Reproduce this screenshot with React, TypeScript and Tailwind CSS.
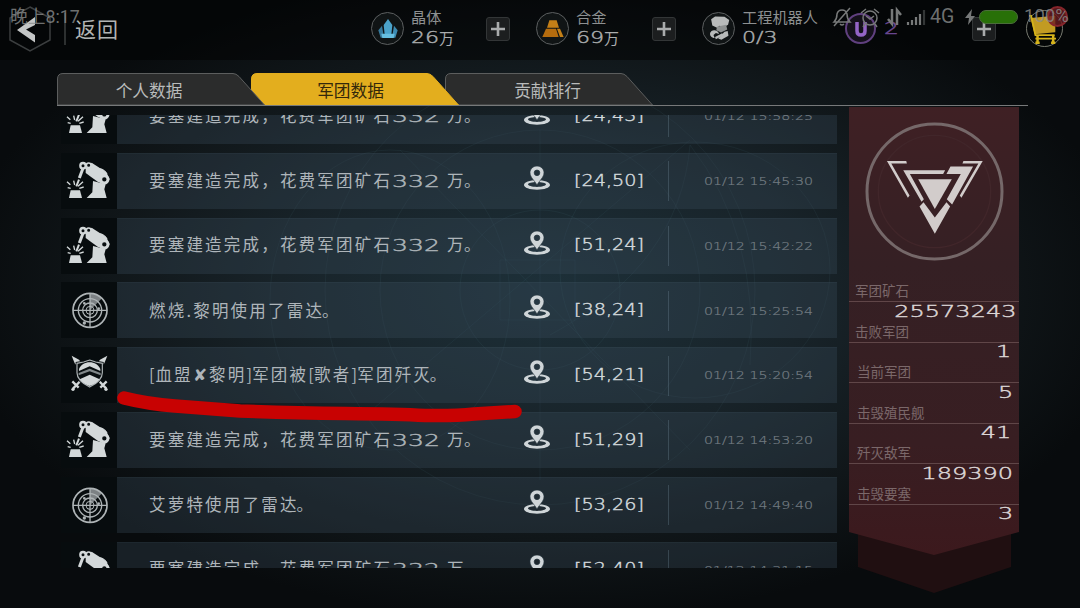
import type { ReactNode } from "react";
import clsx from "clsx";

type EventKind = "build" | "radar" | "battle";

type LogEntry = {
  kind: EventKind;
  text: ReactNode;
  coords: string;
  time: string;
};

function BuildText() {
  return (
    <>
      要塞建造完成，花费军团矿石
      <span className="inline-block w-[48px] font-['DejaVu_Sans'] text-[15px] tracking-normal">
        <span className="inline-block origin-left scale-x-[1.68] font-extralight [-webkit-text-stroke:0.4px]">332</span>
      </span>
      <span className="ml-[7px] tracking-[0.5px]">万。</span>
    </>
  );
}

function BattleText() {
  return (
    <>
      <span className="tracking-[0.8px]">[</span>血盟✘黎明
      <span className="tracking-[0.2px]">]</span>军团被
      <span className="tracking-[0.2px]">[</span>歌者
      <span className="tracking-[0.2px]">]</span>军团歼
      <span className="tracking-normal">灭。</span>
    </>
  );
}

function RadarText({ name }: { name: string }) {
  return (
    <>
      {name}使用了雷<span className="tracking-normal">达。</span>
    </>
  );
}

const entries: LogEntry[] = [
  { kind: "build", text: <BuildText />, coords: "[24,43]", time: "01/12 15:58:25" },
  { kind: "build", text: <BuildText />, coords: "[24,50]", time: "01/12 15:45:30" },
  { kind: "build", text: <BuildText />, coords: "[51,24]", time: "01/12 15:42:22" },
  { kind: "radar", text: <RadarText name="燃烧.黎明" />, coords: "[38,24]", time: "01/12 15:25:54" },
  { kind: "battle", text: <BattleText />, coords: "[54,21]", time: "01/12 15:20:54" },
  { kind: "build", text: <BuildText />, coords: "[51,29]", time: "01/12 14:53:20" },
  { kind: "radar", text: <RadarText name="艾萝特" />, coords: "[53,26]", time: "01/12 14:49:40" },
  { kind: "build", text: <BuildText />, coords: "[52,40]", time: "01/12 14:31:15" },
];

const stats = [
  { label: "军团矿石", value: "25573243", pad: "pl-[6px] pr-[3px]" },
  { label: "击败军团", value: "1", pad: "pl-[6px] pr-[8px]" },
  { label: "当前军团", value: "5", pad: "pl-[8px] pr-[6px]" },
  { label: "击毁殖民舰", value: "41", pad: "pl-[8px] pr-[8px]" },
  { label: "歼灭敌军", value: "189390", pad: "pl-[8px] pr-[6px]" },
  { label: "击毁要塞", value: "3", pad: "pl-[8px] pr-[6px]" },
];

function RobotArmIcon() {
  return (
    <svg viewBox="0 0 168 168" className="h-14 w-14" fill="none" stroke="#d3d8d9">
      <path d="M29 112h28l6 23H24z" fill="#d3d8d9" stroke="none" />
      <path d="M18 86l10 9M38 83l3 13M20 104l9 2M51 100l15-14M55 106l13-4" strokeWidth="4" />
      <path d="M66 46L55 75" strokeWidth="9" />
      <path d="M54 80l-8 20" strokeWidth="6" />
      <path d="M74 46L92 29l44 29 10 21-16 16-20-9-36-26z" fill="#d3d8d9" stroke="none" />
      <path d="M109 50c10-6 24 2 29 14" strokeWidth="4" />
      <path d="M96 84l38 10-4 15 7 26H77l17-17z" fill="#d3d8d9" stroke="none" />
      <circle cx="66" cy="38" r="8" strokeWidth="7" fill="#080e10" />
      <circle cx="83" cy="37" r="7" strokeWidth="5" fill="#080e10" />
      <circle cx="130" cy="79" r="11" strokeWidth="9" fill="#080e10" />
    </svg>
  );
}

function RadarIcon() {
  return (
    <svg viewBox="0 0 168 168" className="h-14 w-14" fill="none" stroke="#aeb4b6">
      <path d="M87 85V34a51 51 0 0 1 36 15z" fill="#aeb4b6" fillOpacity=".7" stroke="none" />
      <circle cx="87" cy="85" r="51" strokeWidth="5" />
      <circle cx="87" cy="85" r="35" strokeWidth="4" />
      <circle cx="87" cy="85" r="22" strokeWidth="4" />
      <circle cx="87" cy="85" r="12" strokeWidth="3" />
      <path d="M87 34v102M36 85h102" strokeWidth="4" />
      <circle cx="70" cy="123" r="5" fill="#aeb4b6" stroke="none" />
      <circle cx="70" cy="64" r="4" fill="#aeb4b6" stroke="none" />
      <circle cx="113" cy="80" r="4" fill="#aeb4b6" stroke="none" />
    </svg>
  );
}

function ShieldIcon() {
  return (
    <svg viewBox="0 0 168 168" className="h-14 w-14" fill="none">
      <g fill="#d3d8d9">
        <path d="M32 26l22 12 10 14-11 10-12-13z" />
        <path d="M139 26l-22 12-10 14 11 10 12-13z" />
      </g>
      <path d="M58 102l-22 23M34 103l19 19M114 102l22 23M137 103l-19 19" stroke="#d3d8d9" strokeWidth="7" />
      <circle cx="36" cy="127" r="5" fill="#d3d8d9" />
      <circle cx="135" cy="127" r="5" fill="#d3d8d9" />
      <path d="M86 34l20 7 22 4v32c0 22-20 37-42 49-22-12-42-27-42-49V45l22-4z" fill="#080e10" />
      <path d="M86 39l18 6 20 4v28c0 18-18 33-38 43-20-10-38-25-38-43V49l20-4z" stroke="#aeb4b6" strokeWidth="3.5" />
      <path d="M54 66c5-12 18-20 32-20s27 8 32 20v6L86 58 54 72z" fill="#d3d8d9" />
      <path d="M53 78l33-13 33 13v7L86 73 53 85z" fill="#81888a" />
      <path d="M56 97l30-14 30 14c-6 9-17 16-30 20-13-4-24-11-30-20z" fill="#d3d8d9" />
    </svg>
  );
}

function EventIcon({ kind }: { kind: EventKind }) {
  if (kind === "radar") return <RadarIcon />;
  if (kind === "battle") return <ShieldIcon />;
  return <RobotArmIcon />;
}

function PinIcon() {
  return (
    <svg viewBox="0 0 78 72" className="h-6 w-[26px]">
      <path
        fillRule="evenodd"
        fill="#cfd5d8"
        d="M39 43c22 0 39 6 39 14S61 71 39 71 0 65 0 57s17-14 39-14zm0 5c-15 0-27 3-27 7s12 8 27 8 27-4 27-8-12-7-27-7z"
      />
      <path
        fillRule="evenodd"
        fill="#cfd5d8"
        stroke="#24333c"
        strokeWidth="2"
        d="M39 0c12 0 21 9 21 20 0 14-14 24-21 37C32 44 18 34 18 20 18 9 27 0 39 0zm0 12a8 8 0 1 0 0 17 8 8 0 0 0 0-17z"
      />
    </svg>
  );
}

function LogRow({ entry }: { entry: LogEntry }) {
  return (
    <li className="flex h-14 shrink-0">
      <div className="w-14 bg-[#070c0e]">
        <EventIcon kind={entry.kind} />
      </div>
      <div className="flex flex-1 items-center border-t border-[#8fb4c4]/5 bg-[#3a4d5c]/32">
        <p className="w-[407px] pb-[2px] pl-8 text-[16.5px] tracking-[2.2px] whitespace-nowrap text-[#aeb5ba]">
          {entry.text}
        </p>
        <div className="mb-[7px] w-[50px]">
          <PinIcon />
        </div>
        <div className="flex h-10 w-[95px] items-center border-r border-[#6c8591]/35 font-['DejaVu_Sans'] text-[15.5px] font-extralight text-[#d3d9dc]">
          <span className="origin-left scale-x-[1.24] [-webkit-text-stroke:0.4px]">{entry.coords}</span>
        </div>
        <time className="ml-[35px] origin-left scale-x-[1.29] pt-[2px] font-['DejaVu_Sans'] text-[11px] font-extralight whitespace-nowrap text-[#747d83] [-webkit-text-stroke:0.2px]">
          {entry.time}
        </time>
      </div>
    </li>
  );
}

function PlusButton() {
  return (
    <button className="flex h-6 w-6 items-center justify-center rounded-[3px] border border-[#333637] bg-[#1c1e1f]">
      <svg viewBox="0 0 16 16" className="h-4 w-4" stroke="#a9abac" strokeWidth="2.6">
        <path d="M8 1v14M1 8h14" />
      </svg>
    </button>
  );
}

function Resource({ icon, name, amount }: { icon: ReactNode; name: string; amount: ReactNode }) {
  return (
    <div className="flex items-center">
      <div className="flex h-[33px] w-[33px] items-center justify-center rounded-full border-[1.5px] border-[#5c5f60] bg-[#101415]">
        {icon}
      </div>
      <div className="mb-[3px] ml-[7px] text-[#8d9091]">
        <p className="h-[19px] text-[15.2px] leading-[17px] whitespace-nowrap">{name}</p>
        <p className="h-[19px] text-[15px] leading-[19px] whitespace-nowrap text-[#aaadae]">{amount}</p>
      </div>
    </div>
  );
}

function Amount({ value, children }: { value: string; children?: ReactNode }) {
  return (
    <span className="flex items-center">
      <span className="w-[28px] pt-px font-['DejaVu_Sans'] text-[16px] font-extralight [-webkit-text-stroke:0.4px]">
        <span className="inline-block origin-left scale-x-[1.38]">{value}</span>
      </span>
      {children}
    </span>
  );
}

function CrystalIcon() {
  return (
    <svg viewBox="0 0 60 60" className="h-5 w-5">
      <path d="M30 0l13 18-4 38H21l-4-38z" fill="#4ba3cb" />
      <path d="M12 20l6 36H8L1 34z" fill="#36799c" />
      <path d="M48 20l-6 36h10l7-22z" fill="#3d8bb2" />
      <path d="M10 44h40l-3 13H13z" fill="#66bee0" />
    </svg>
  );
}

function AlloyIcon() {
  return (
    <svg viewBox="0 0 66 54" className="h-[18px] w-[22px]">
      <path d="M22 1h22l7 22H15z" fill="#c47f17" />
      <path d="M12 26h30l8 25H1z" fill="#b56c0e" />
      <path d="M45 26h9l11 25H54z" fill="#c47f17" />
    </svg>
  );
}

function EngineerIcon() {
  return (
    <svg viewBox="0 0 60 66" className="h-[26px] w-[24px]" fill="#b8baba">
      <path d="M10 8l10-7 24 1 12 8-3 12-12 7-9-4-7 5-12-6z" />
      <path d="M25 27l23-5 3 12-16 8-12-6z" fill="#8d9090" />
      <path d="M44 40l8-2 2 12-18 10-8-3z" />
      <path d="M11 38c8-4 18 0 19 8l-8-3-6 5 3 8c-8 0-14-7-11-14z" />
      <path d="M20 53l18-9 4 4-20 11z" />
    </svg>
  );
}

function CartIcon() {
  return (
    <svg viewBox="0 0 90 90" className="h-[32px] w-[32px]" fill="none" stroke="#d6b31a">
      <path d="M4 14l70-6v46l-58 6z" fill="#c29b22" stroke="none" />
      <path d="M0 8h6l12 54h54M18 72h58" strokeWidth="5" />
      <path d="M24 62v24M68 62v24M18 84h12M62 84h12" strokeWidth="7" />
    </svg>
  );
}

function Header() {
  return (
    <header className="flex h-[60px] bg-black/45 pb-[3px]">
      <div className="flex w-[371px] items-center pt-px pl-2">
        <svg viewBox="0 0 44 48" className="h-12 w-11" fill="none">
          <path d="M22 2l20 11v22L22 46 2 35V13z" stroke="#3b3e3f" strokeWidth="1.5" />
          <path d="M27 12v8l-9 4.5 9 5.5v7.500L9 25z" fill="#c4c6c6" />
        </svg>
        <span className="ml-3 h-8 w-[2px] bg-[#2d3030]" />
        <span className="ml-[9px] text-[21px] tracking-[1px] text-[#b2b4b4]">返回</span>
      </div>
      <div className="flex w-[165px] items-center">
        <div className="w-[115px]">
          <Resource icon={<CrystalIcon />} name="晶体" amount={<Amount value="26">万</Amount>} />
        </div>
        <PlusButton />
      </div>
      <div className="flex w-[166px] items-center">
        <div className="w-[116px]">
          <Resource icon={<AlloyIcon />} name="合金" amount={<Amount value="69">万</Amount>} />
        </div>
        <PlusButton />
      </div>
      <div className="flex w-[143px] items-center">
        <Resource icon={<EngineerIcon />} name="工程机器人" amount={<Amount value="0/3" />} />
      </div>
      <div className="flex items-center">
        <div className="flex h-[31px] w-[31px] items-center justify-center rounded-full border-2 border-[#60407f] bg-[#15111b]">
          <svg viewBox="0 0 12 16" className="h-4 w-3" fill="none" stroke="#9464c6" strokeWidth="3.500">
            <path d="M2 1v9q0 4 4 4t4-4V1" />
          </svg>
        </div>
        <span className="ml-[8px] w-[88px] font-['DejaVu_Sans'] text-[16px] font-extralight text-[#6c4994] [-webkit-text-stroke:0.5px]">
          <span className="inline-block origin-left scale-x-[1.45]">2</span>
        </span>
        <PlusButton />
        <div className="relative ml-[30px] flex h-[37px] w-[37px] items-center justify-center rounded-full border-[1.5px] border-[#77796f]">
          <CartIcon />
          <span className="absolute -top-[5px] -right-[6px] h-[21px] w-[21px] rounded-full border-2 border-[#85252b] bg-[#6b1b20]/80" />
        </div>
      </div>
    </header>
  );
}

// Phone status bar, drawn translucent over the game's own header.
function StatusBar() {
  return (
    <div className="absolute inset-x-0 top-0 flex h-[34px] items-center justify-between pr-[10px] pl-[10px] font-['Roboto','Noto_Sans_CJK_SC',sans-serif] text-[#8b8d8d]/80">
      <span className="text-[17.8px]">晚上8:17</span>
      <div className="flex items-center">
        <svg viewBox="0 0 98 24" className="mr-[2px] h-6 w-[98px]" fill="none" stroke="#777979" strokeWidth="1.5">
          <path d="M4 17q3-3 3-8 1-4 5-4t5 4q0 5 3 8zM10 19q2 2 4 0M20 3L4 21" />
          <circle cx="40" cy="13" r="7" />
          <path d="M36 11l4 3 4-3M31 8l5-4M49 8l-5-4M35 19l-2 3M45 19l2 3" />
          <path d="M62 4v15l-4-5M67 20V5l4 5" strokeWidth="2.5" />
          <path d="M78 20v-3M82 20v-5M86 20v-8M90 20V9" strokeWidth="2.2" />
          <path d="M94 20V5" strokeWidth="2.2" stroke="#333636" />
        </svg>
        <span className="w-[35px] text-[19.5px]">4G</span>
        <svg viewBox="0 0 10 16" className="h-4 w-[10px]" fill="#777979">
          <path d="M7 0L0 9h4l-1 7 7-9H6z" />
        </svg>
        <span className="ml-[4px] h-[14px] w-[39px] rounded-full border border-[#4a6d3a] bg-[#287008]" />
        <span className="ml-[6px] w-[46px] text-[18.5px]">100%</span>
      </div>
    </div>
  );
}

function Tab({ label, active, className }: { label: string; active?: boolean; className: string }) {
  return (
    <button className={clsx("relative h-8 w-[194px] pt-[2px]", className)}>
      <svg viewBox="0 0 208 32" className="absolute top-0 left-0 h-8 w-[208px]">
        <path
          d="M.5 32V6Q.5.500 6 .5H176q3 0 6 3L207.500 32z"
          fill={active ? "#e3ae1e" : "#2b2c2c"}
          stroke={active ? "#e3ae1e" : "#5c5e5e"}
        />
      </svg>
      <span
        className={clsx(
          "relative text-[16.7px] leading-none whitespace-nowrap",
          active ? "text-[#33280b]" : "text-[#b9bbbb]",
        )}
      >
        {label}
      </span>
    </button>
  );
}

function Emblem() {
  return (
    <svg viewBox="73 64 416 418" className="mx-auto h-[139px] w-[139px]" fill="#d2cccb">
      <circle cx="281" cy="273" r="203" fill="none" stroke="#756869" strokeWidth="9" />
      <circle cx="281" cy="273" r="169" fill="none" stroke="#41262a" strokeWidth="4" />
      <path d="M138 181h58l2 8h-47l55 96-5 7z" />
      <path d="M368 181h58l-64 111-5-7 56-96h-48z" />
      <path d="M187 209h126l-6 11H207l42 76-7 8z" />
      <path d="M329 198h68l-63 114-16-16 42-76h-43z" />
      <path d="M232 236h101l-51 90z" />
      <path d="M248 305l34 46 35-46 11 13-46 82-46-82z" />
    </svg>
  );
}

function LegionBanner() {
  return (
    <aside className="relative ml-3 h-[487px] w-[170px]">
      <svg viewBox="0 0 170 487" className="absolute inset-0 h-full w-full">
        <defs>
          <linearGradient id="banner" x1="0" y1="0" x2="0" y2="1">
            <stop offset="0" stopColor="#3f2024" />
            <stop offset=".35" stopColor="#352024" />
            <stop offset=".75" stopColor="#381e22" />
            <stop offset="1" stopColor="#3c191d" />
          </linearGradient>
        </defs>
        <path d="M9 420h153v40l-77 26-76-26z" fill="#200f11" />
        <path d="M0 0h170v425l-85 23L0 425z" fill="url(#banner)" />
      </svg>
      <div className="relative pt-[15px]">
        <Emblem />
        <dl className="mt-[20px]">
          {stats.map((stat) => (
            <div key={stat.label} className={clsx("relative h-[40.5px]", stat.pad)}>
              <dt className="flex h-5 items-center pb-px text-[13.5px] text-[#7b686a]">{stat.label}</dt>
              <span className="absolute inset-x-0 top-5 h-px bg-[#604648]" />
              <dd className="flex h-5 items-center justify-end pt-px font-['DejaVu_Sans'] text-[16px] font-extralight text-[#ddd7d7] [-webkit-text-stroke:0.4px]">
                <span className="origin-right scale-x-150">{stat.value}</span>
              </dd>
            </div>
          ))}
        </dl>
      </div>
    </aside>
  );
}

// Faint star map behind the log list.
function StarMap() {
  return (
    <svg viewBox="0 0 1080 608" className="absolute inset-0 h-full w-full" fill="none" stroke="#7fb3c4" strokeOpacity=".06">
      <circle cx="540" cy="290" r="80" />
      <circle cx="540" cy="290" r="160" />
      <circle cx="540" cy="290" r="215" />
      <ellipse cx="695" cy="270" rx="135" ry="128" />
      <ellipse cx="390" cy="300" rx="120" ry="150" />
      <path d="M540 130v350M360 420L690 140M400 150l290 300M500 260h75v60h-75z" />
      <path d="M690 145q70 90 60 220M690 145q-10 120-140 190" />
    </svg>
  );
}

export default function App() {
  return (
    <div className="relative h-[608px] w-[1080px] overflow-hidden bg-[#080b0d] font-['Noto_Sans_CJK_SC',sans-serif] select-none">
      <div className="absolute inset-0 bg-[radial-gradient(ellipse_590px_330px_at_545px_290px,#1d3039_0%,#182329_45%,#101619_75%,#080b0d_100%)]" />
      <StarMap />

      <div className="relative">
        <Header />

        <nav className="mt-[13px] ml-[57px] flex h-[33px] w-[971px] border-b-[1.5px] border-[#77797a]">
          <Tab label="个人数据" className="z-20 pr-[10px]" />
          <Tab label="军团数据" active className="z-10 pl-[5px]" />
          <Tab label="贡献排行" className="pl-[11px]" />
        </nav>

        <main className="ml-[61px] flex pt-px">
          <div className="mt-[8px] h-[453px] w-[776px] overflow-hidden">
            <ul className="-mt-[27px] flex flex-col gap-[8.8px]">
              {entries.map((entry) => (
                <LogRow key={entry.time} entry={entry} />
              ))}
            </ul>
          </div>
          <LegionBanner />
        </main>
      </div>

      <svg viewBox="0 0 1080 608" className="pointer-events-none absolute inset-0 h-full w-full" fill="none">
        <path
          d="M124 398Q148 404 175 406T240 411Q290 413 345 413.500T425 415.500Q455 416 474 414L515 411.500"
          stroke="#c80202"
          strokeWidth="13.500"
          strokeLinecap="round"
          strokeLinejoin="round"
        />
      </svg>

      <StatusBar />
    </div>
  );
}
